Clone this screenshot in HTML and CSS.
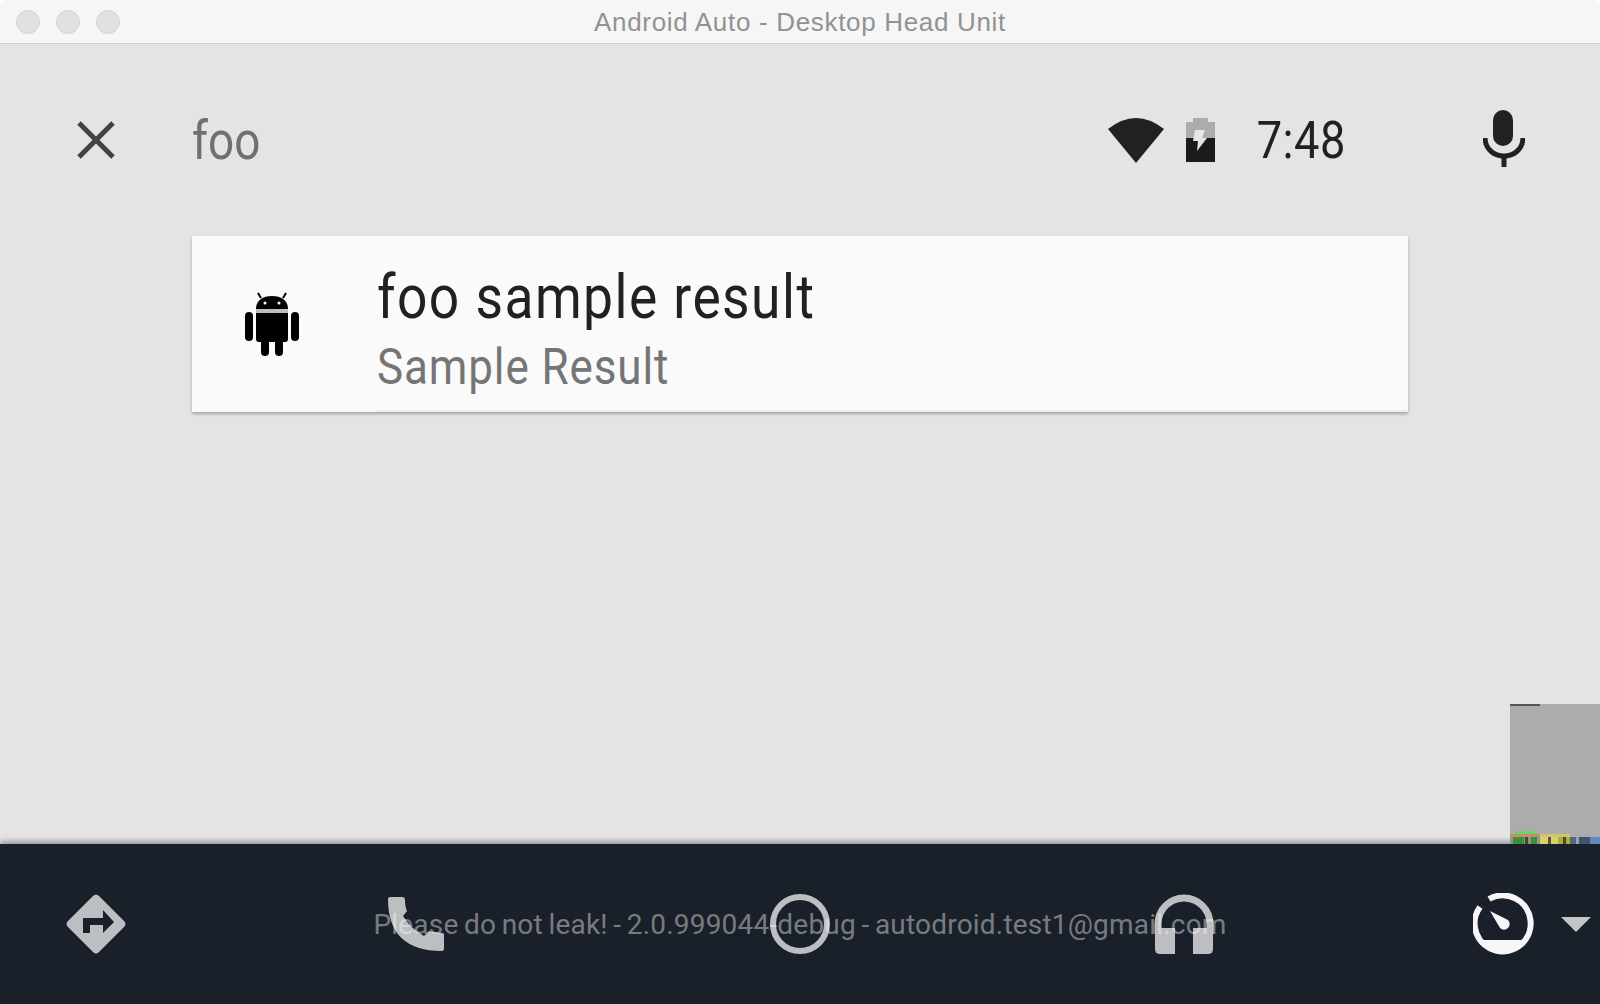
FILE: index.html
```html
<!doctype html>
<html lang="en">
<head>
    <meta charset="UTF-8">
    <title>Android Auto - Desktop Head Unit</title>
    <link rel="stylesheet" href="styles.css">
</head>
<body>
<div class="titlebar">
    <div class="lights">
        <span class="light"></span>
        <span class="light"></span>
        <span class="light"></span>
    </div>
    <div class="window-title">Android Auto - Desktop Head Unit</div>
</div>

<div class="main">
    <div class="toprow">
        <div class="slot">
            <svg class="ic-close" viewBox="0 0 38 38"><path d="M2 2L36 36M36 2L2 36"/></svg>
        </div>
        <div class="search">
            <span class="query">foo</span>
            <div class="status">
                <svg class="ic-wifi" viewBox="0 0 56 45"><path d="M0 11Q28 -11 56 11L28 45Z"/></svg>
                <svg class="ic-battery" viewBox="0 0 29 44">
                    <path class="batt-empty" d="M7 0H22V4H29V21H0V4H7Z"/>
                    <rect class="batt-full" x="0" y="20" width="29" height="24"/>
                    <path class="batt-bolt" d="M9 12H19L16 20H21L11 33L12 23H7Z"/>
                </svg>
                <span class="clock">7:48</span>
            </div>
        </div>
        <div class="slot">
            <svg class="ic-mic" viewBox="0 0 42 57">
                <rect x="10" y="0" width="20" height="36" rx="10"/>
                <path class="mic-arc" d="M2 28C3 52 39 52 40 28"/>
                <rect x="18.500" y="44" width="5" height="13"/>
            </svg>
        </div>
    </div>

    <div class="card">
        <div class="card-icon">
            <svg class="ic-android" viewBox="0 0 56 64">
                <rect x="1" y="20" width="8" height="29" rx="4"/>
                <rect x="47" y="20" width="8" height="29" rx="4"/>
                <path d="M12 17C12 8 19 4 28 4C37 4 44 8 44 17Z"/>
                <rect class="collar" x="12" y="17" width="32" height="4"/>
                <path d="M17 6L14 1M39 6L42 1" class="antenna"/>
                <path d="M12 21H44V47Q44 50 41 50H15Q12 50 12 47Z"/>
                <rect x="17" y="46" width="8" height="18" rx="4"/>
                <rect x="31" y="46" width="8" height="18" rx="4"/>
                <circle class="eye" cx="21" cy="11" r="1.500"/>
                <circle class="eye" cx="35" cy="11" r="1.500"/>
            </svg>
        </div>
        <div class="card-text">
            <div class="card-title">foo sample result</div>
            <div class="card-sub">Sample Result</div>
        </div>
    </div>
</div>

<div class="bottombar">
    <div class="slot">
        <svg class="ic-nav" viewBox="0 0 60 60">
            <path class="nav-bg" d="M27 2Q30 -1 33 2L58 27Q61 30 58 33L33 58Q30 61 27 58L2 33Q-1 30 2 27Z"/>
            <path class="nav-arrow" d="M17 39V24H37V16L48 28L37 39V31H24V39Z"/>
        </svg>
    </div>
    <div class="apps">
        <div class="app">
            <svg class="ic-phone" viewBox="0 0 56 54"><path d="M2 0H14Q17 0 17 3Q17 10 19 14L15 19Q22 31 36 39L41 34Q48 36 54 36Q56 36 56 38V52Q56 54 54 54Q0 54 0 2Q0 0 2 0Z"/></svg>
        </div>
        <div class="app">
            <span class="ic-home"></span>
        </div>
        <div class="app">
            <svg class="ic-headphones" viewBox="0 0 60 60">
                <path class="hp-band" d="M4 40V30A26 26 0 0 1 56 30V40"/>
                <path d="M1 38Q1 34 5 34H21V60H6Q1 60 1 55Z"/>
                <path d="M59 38Q59 34 55 34H39V60H54Q59 60 59 55Z"/>
            </svg>
        </div>
    </div>
    <div class="speed">
        <svg class="ic-speed" viewBox="0 0 62 62">
            <path class="speed-ring" d="M16 6A28 28 0 1 1 7 14"/>
            <path class="speed-fill" d="M8 47H54A30 30 0 0 1 8 47Z"/>
            <path class="speed-fill" d="M17 18L35 27A5.500 5.500 0 0 1 27 35Z"/>
        </svg>
        <span class="arrow-down"></span>
    </div>
</div>

<!-- watermark and debug overlay sit on top of everything -->
<div class="watermark">Please do not leak! - 2.0.999044-debug - autodroid.test1@gmail.com</div>
<div class="debug-panel">
    <div class="debug-top"></div>
    <svg class="debug-strip" viewBox="0 0 90 13">
        <rect x="5" y="0" width="21" height="3" fill="#6fd25a"/>
        <rect x="0" y="3" width="30" height="3" fill="#c2906f"/>
        <rect x="30" y="3" width="30" height="3" fill="#cfc86a"/>
        <rect x="0" y="6" width="90" height="7" fill="#8f9a84"/>
        <rect x="3" y="6" width="11" height="7" fill="#3f8f3a"/>
        <rect x="15" y="6" width="3" height="7" fill="#3c4a38"/>
        <rect x="21" y="6" width="6" height="7" fill="#3f8f3a"/>
        <rect x="30" y="6" width="8" height="7" fill="#d8d26c"/>
        <rect x="38" y="6" width="3" height="7" fill="#57563a"/>
        <rect x="41" y="6" width="7" height="7" fill="#d8d26c"/>
        <rect x="48" y="6" width="5" height="7" fill="#b3ad35"/>
        <rect x="53" y="6" width="3" height="7" fill="#4a4a2c"/>
        <rect x="56" y="6" width="4" height="7" fill="#b3ad35"/>
        <rect x="60" y="6" width="6" height="7" fill="#56677d"/>
        <rect x="66" y="6" width="3" height="7" fill="#98a3ae"/>
        <rect x="69" y="6" width="11" height="7" fill="#42546c"/>
        <rect x="80" y="6" width="10" height="7" fill="#5f8ac0"/>
    </svg>
</div>
</body>
</html>
```

FILE: styles.css
```css
html, body{
    margin: 0;
    height: 100%;
    overflow: hidden;
}
body{
    position: relative;
    display: flex;
    flex-direction: column;
    height: 1004px;
    background: #fff;
    font-family: Roboto, sans-serif;
}
svg{
    display: block;
}

/* window chrome */
.titlebar{
    position: relative;
    height: 43px;
    flex: none;
    display: flex;
    align-items: center;
    justify-content: center;
    background: #f6f6f6;
    border-bottom: 1px solid #cfcfcf;
    border-radius: 5px 5px 0 0;
}
.lights{
    position: absolute;
    left: 16px;
    top: 10px;
    display: flex;
    gap: 16px;
}
.light{
    width: 22px;
    height: 22px;
    border-radius: 50%;
    background: #e0e0e0;
    border: 1px solid #d2d2d2;
}
.window-title{
    font-family: "Liberation Sans", sans-serif;
    font-size: 26px;
    letter-spacing: .68px;
    padding-top: 2px;
    color: #929292;
}

/* main area */
.main{
    flex: 1;
    background: #e4e4e4;
}
.toprow{
    height: 192px;
    display: flex;
    align-items: center;
}
.slot{
    width: 192px;
    flex: none;
    display: flex;
    justify-content: center;
    align-items: center;
}
.ic-close{
    width: 38px;
    height: 38px;
}
.ic-close path{
    stroke: #424242;
    stroke-width: 5;
    fill: none;
}
.search{
    flex: 1;
    display: flex;
    align-items: center;
    justify-content: space-between;
    padding-right: 62px;
}
.query{
    display: inline-block;
    font-size: 54px;
    color: #707070;
    transform: scaleX(.85);
    transform-origin: left;
}
.status{
    display: flex;
    align-items: center;
}
.ic-wifi{
    width: 56px;
    height: 45px;
    fill: #212121;
}
.ic-battery{
    width: 29px;
    height: 44px;
    margin-left: 22px;
}
.batt-empty{
    fill: #acacac;
}
.batt-full{
    fill: #1b1b1b;
}
.batt-bolt{
    fill: #e6e6e6;
}
.clock{
    display: inline-block;
    width: 131px;
    text-align: right;
    font-size: 52px;
    letter-spacing: .6px;
    color: #212121;
    transform: scaleX(.87);
    transform-origin: right;
}
.ic-mic{
    width: 42px;
    height: 57px;
    margin-bottom: 3px;
    fill: #212121;
}
.mic-arc{
    fill: none;
    stroke: #212121;
    stroke-width: 5;
}

/* result card */
.card{
    width: 1216px;
    height: 176px;
    margin-left: 192px;
    display: flex;
    background: #fafafa;
    box-shadow: 0 2px 3px rgba(0,0,0,.28);
}
.card-icon{
    width: 184px;
    display: flex;
    align-items: center;
    padding-left: 52px;
    box-sizing: border-box;
}
.ic-android{
    width: 56px;
    height: 64px;
    fill: #000;
}
.collar{
    fill: #bdbdbd;
}
.antenna{
    stroke: #000;
    stroke-width: 2;
}
.eye{
    fill: #fafafa;
}
.card-text{
    flex: 1;
    border-bottom: 2px solid #ececec;
    padding-left: 1px;
}
.card-title{
    font-size: 62px;
    line-height: 70px;
    margin-top: 26px;
    letter-spacing: 1.7px;
    color: #212121;
    transform: scaleX(.86);
    transform-origin: left;
}
.card-sub{
    font-size: 50px;
    line-height: 60px;
    margin-top: 5px;
    letter-spacing: 1px;
    color: #757575;
    transform: scaleX(.88);
    transform-origin: left;
}

/* bottom nav */
.bottombar{
    position: relative;
    height: 160px;
    flex: none;
    display: flex;
    align-items: center;
    background: #1a202a;
    box-shadow: 0 -3px 5px rgba(0,0,0,.32);
}
.ic-nav{
    width: 60px;
    height: 60px;
}
.nav-bg{
    fill: #bdbec1;
}
.nav-arrow{
    fill: #1a202a;
}
.apps{
    width: 1152px;
    margin-left: 32px;
    display: flex;
}
.app{
    flex: 1;
    display: flex;
    justify-content: center;
    align-items: center;
}
.ic-phone{
    width: 56px;
    height: 54px;
    fill: #bdbec1;
}
.ic-home{
    width: 48px;
    height: 48px;
    border: 6px solid #bdbec1;
    border-radius: 50%;
}
.ic-headphones{
    width: 60px;
    height: 60px;
    fill: #bdbec1;
}
.hp-band{
    fill: none;
    stroke: #bdbec1;
    stroke-width: 7;
}
.speed{
    flex: 1;
    display: flex;
    align-items: center;
    padding-left: 97px;
    gap: 26px;
}
.ic-speed{
    width: 62px;
    height: 62px;
}
.speed-ring{
    fill: none;
    stroke: #f6f6f8;
    stroke-width: 6;
}
.speed-fill{
    fill: #f6f6f8;
}
.arrow-down{
    flex: none;
    width: 0;
    height: 0;
    border-left: 15px solid transparent;
    border-right: 15px solid transparent;
    border-top: 15px solid #c4c5c8;
}

/* overlays */
.watermark{
    position: absolute;
    left: 0;
    right: 0;
    top: 908px;
    text-align: center;
    font-size: 28px;
    line-height: 34px;
    letter-spacing: .2px;
    word-spacing: -1.6px;
    color: rgba(255,255,255,.42);
}
.debug-panel{
    position: absolute;
    left: 1510px;
    top: 704px;
    width: 90px;
    height: 140px;
    display: flex;
    flex-direction: column;
    justify-content: space-between;
    background: #acacac;
}
.debug-top{
    width: 30px;
    height: 2px;
    background: #555;
}
.debug-strip{
    width: 90px;
    height: 13px;
}
```
